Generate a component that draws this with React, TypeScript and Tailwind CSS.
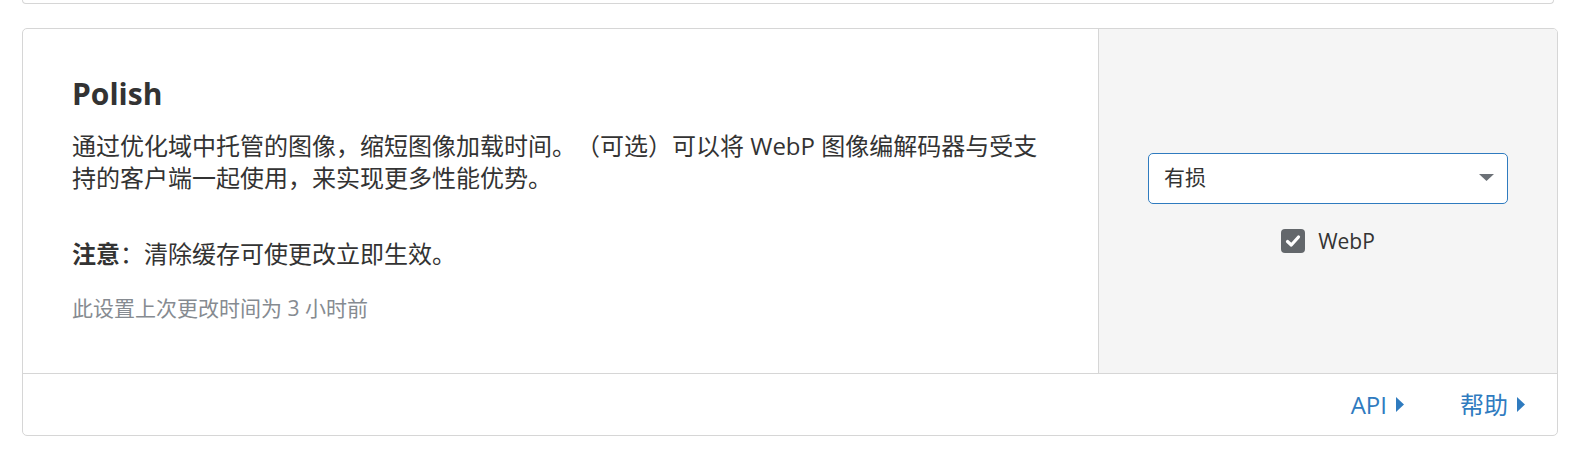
import React from 'react';

const Caret: React.FC = () => (
    <svg width="8" height="15" viewBox="0 0 8 15" className="ml-[9px] shrink-0">
        <path d="M0 0 L8 7.5 L0 15 Z" fill="#2f7bbf" />
    </svg>
);

const App: React.FC = () => {
    return (
        <div className="w-full h-[454px] overflow-hidden bg-white text-[#333333] font-['Open_Sans','Noto_Sans_CJK_SC',sans-serif] [text-spacing-trim:space-all]">
            {/* previous card, only its bottom edge shows */}
            <div className="ml-[22px] w-[1532px] h-[4px] border-x border-b border-[#d6d6d6] rounded-b-[5px]" />

            <div className="ml-[22px] mt-[24px] w-[1536px] h-[408px] border border-[#d6d6d6] rounded-[5px] overflow-hidden flex flex-col">
                <div className="flex h-[345px] border-b border-[#d6d6d6]">
                    <div className="flex-1 pl-[49px] pt-[47px]">
                        <h2 className="text-[30px] leading-[36px] font-bold text-[#333333]">Polish</h2>
                        <p className="mt-[18px] w-[976px] text-[24px] leading-[32px]">
                            通过优化域中托管的图像，缩短图像加载时间。（可选）可以将 WebP 图像编解码器与受支持的客户端一起使用，来实现更多性能优势。
                        </p>
                        <p className="mt-[44px] text-[24px] leading-[32px]">
                            <span className="font-bold">注意</span>：清除缓存可使更改立即生效。
                        </p>
                        <p className="mt-[24px] text-[21px] leading-[28px] text-[#868b91]">
                            此设置上次更改时间为 3 小时前
                        </p>
                    </div>

                    <div className="w-[459px] border-l border-[#d6d6d6] bg-[#f5f5f5] flex flex-col items-center justify-center pt-[5px]">
                        <div className="w-[360px] h-[51px] border border-[#2f7bbf] rounded-[5px] bg-white flex items-center justify-between pl-[15px] pr-[13px]">
                            <span className="text-[21px] text-[#333333]">有损</span>
                            <svg width="15" height="8" viewBox="0 0 15 8">
                                <path d="M0 0 L15 0 L7.5 7 Z" fill="#6c7177" />
                            </svg>
                        </div>
                        <label className="mt-[23px] flex items-center gap-[13px]">
                            <span className="w-[24px] h-[24px] shrink-0 rounded-[4px] bg-[#63676b] flex items-center justify-center">
                                <svg width="18" height="18" viewBox="0 0 18 18">
                                    <path d="M3.5 9.5 L7.3 13 L14.5 5" stroke="white" strokeWidth="3.2" fill="none" strokeLinecap="round" strokeLinejoin="round" />
                                </svg>
                            </span>
                            <span className="text-[21px] leading-[28px] text-[#333333]">WebP</span>
                        </label>
                    </div>
                </div>

                <div className="flex-1 flex items-center justify-end pr-[32px] gap-[56px] text-[24px] text-[#2f7bbf]">
                    <a className="flex items-center">
                        API
                        <Caret />
                    </a>
                    <a className="flex items-center">
                        帮助
                        <Caret />
                    </a>
                </div>
            </div>
        </div>
    );
};

export default App;
